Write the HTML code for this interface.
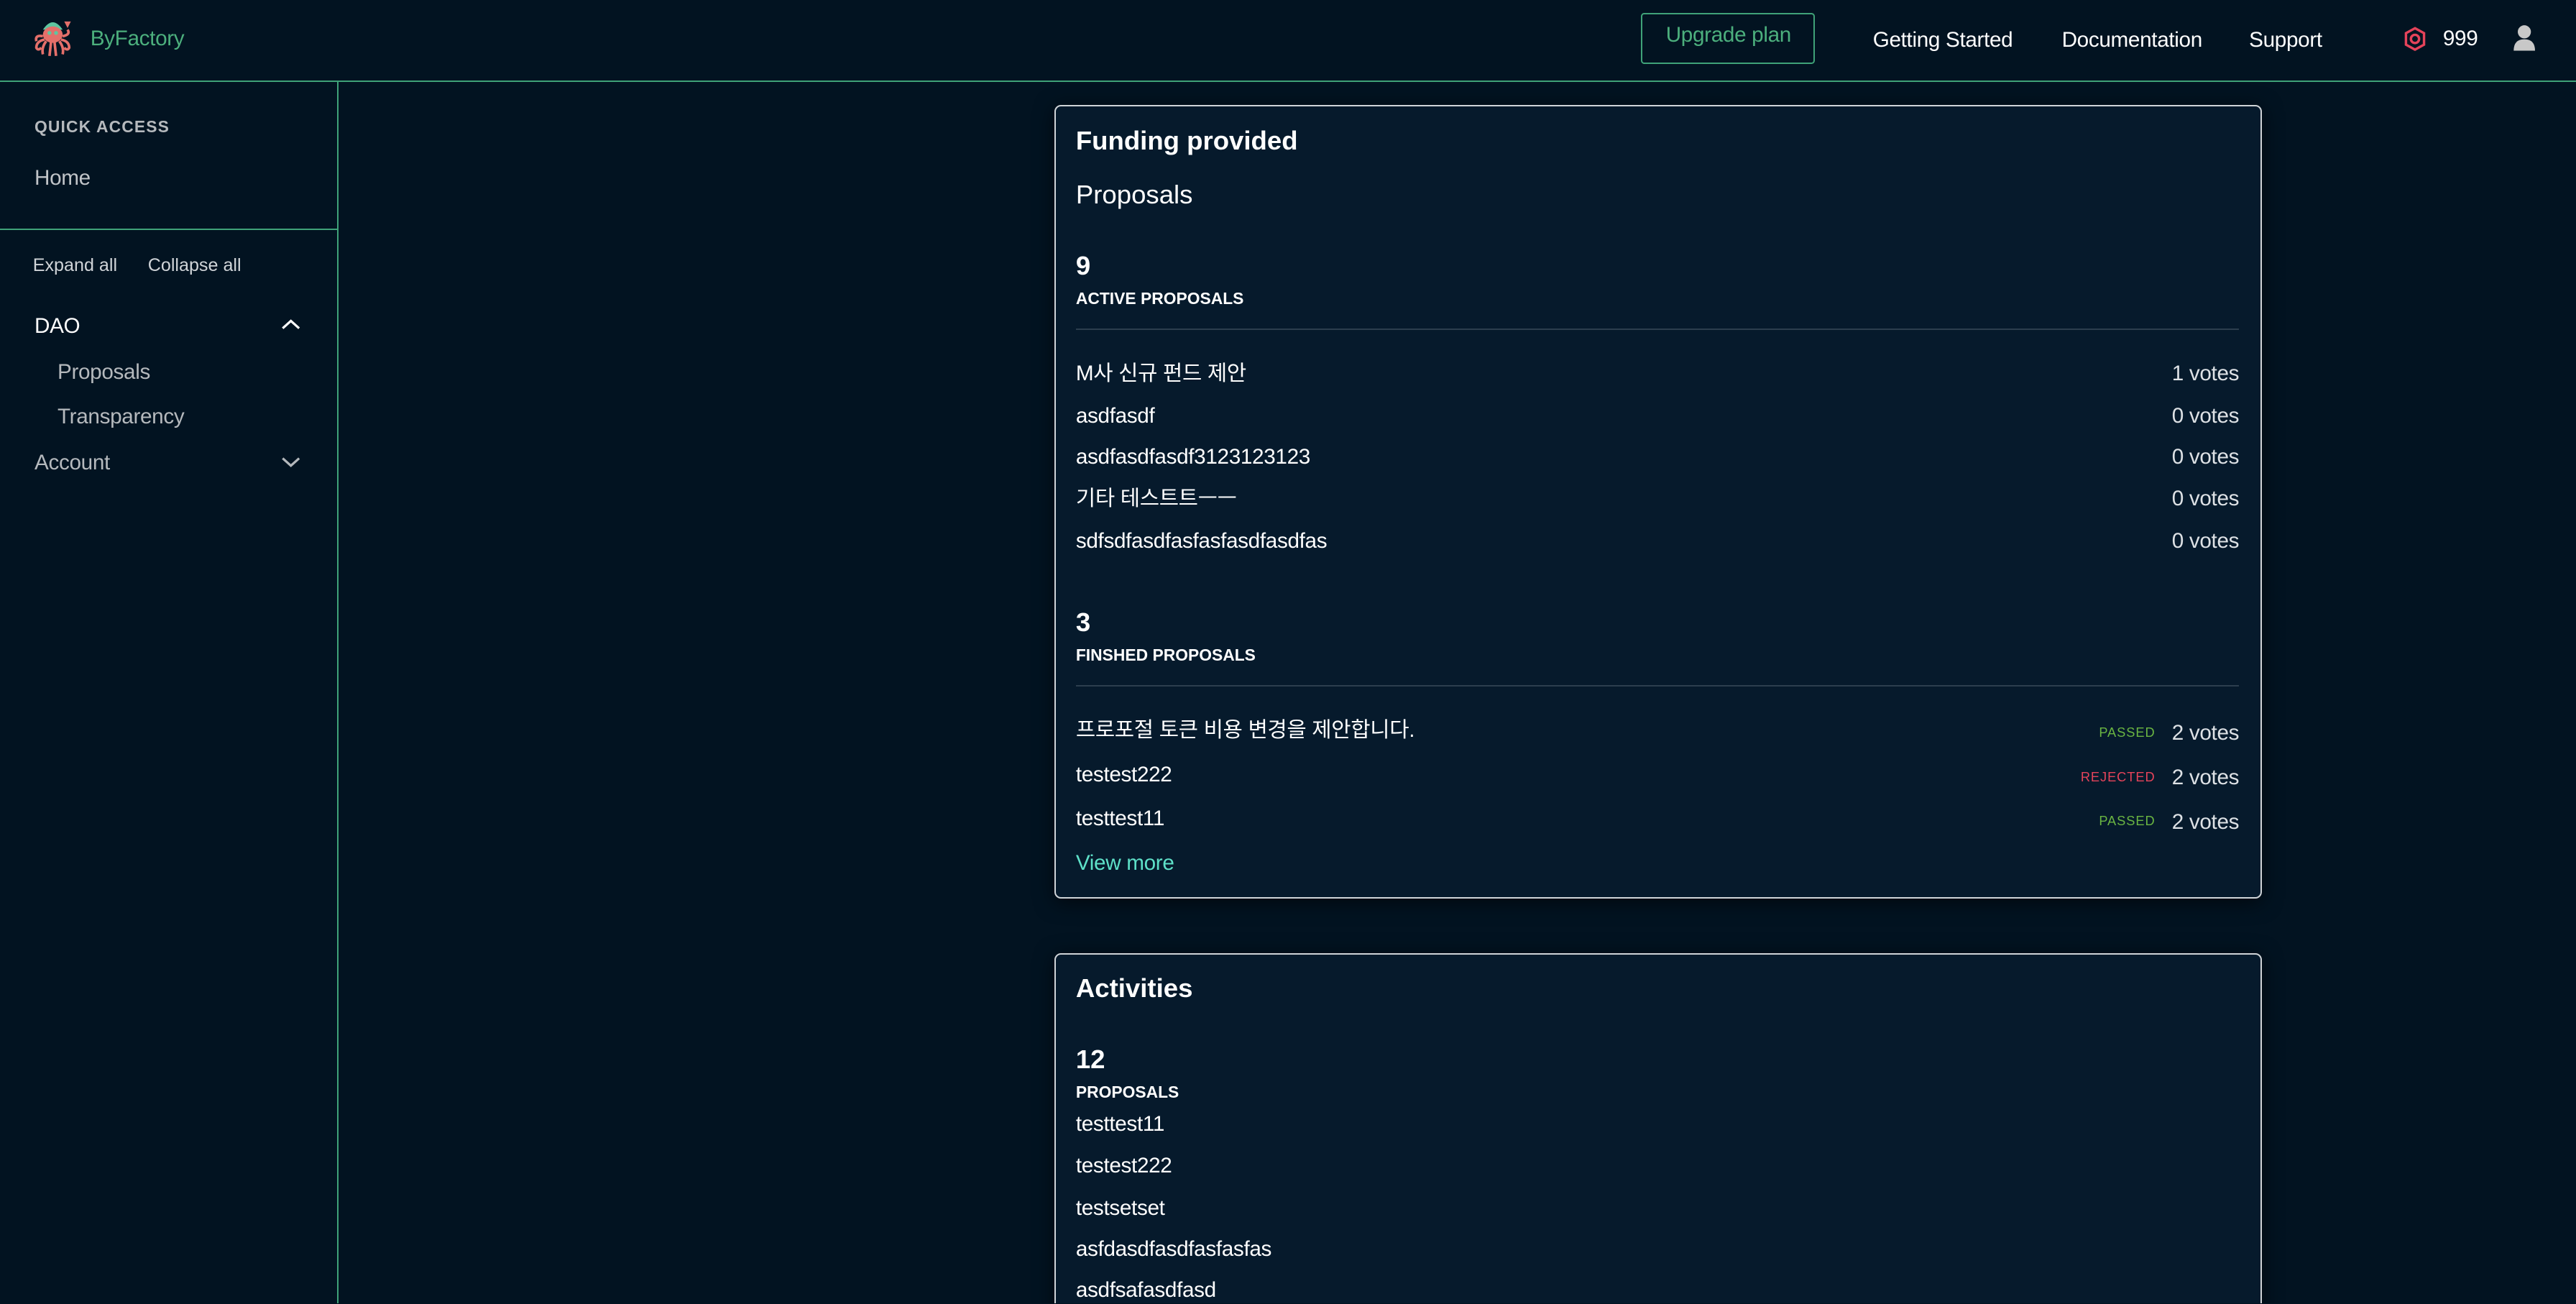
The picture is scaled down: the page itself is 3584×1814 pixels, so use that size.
<!DOCTYPE html>
<html><head><meta charset="utf-8"><style>
html,body{margin:0;padding:0;background:#021321;overflow:hidden;width:3584px;height:1814px}
#w{zoom:2.285714;position:relative;width:1568px;height:793px;overflow:hidden;font-family:"Liberation Sans","Noto Sans CJK KR",sans-serif;color:#fff}
.t{position:absolute;white-space:nowrap;line-height:1}
.f13{font-size:13px;letter-spacing:-.15px}
.card{position:absolute;left:642px;width:733px;background:#061a2c;border:1px solid #d0d4d8;border-radius:4px;box-shadow:0 2px 12px rgba(0,0,0,.6)}
.hr{position:absolute;left:12px;right:13px;height:1px;background:#2c3e4e}
.r{right:13px;text-align:right;color:#dde1e5}
.g{color:#6ab542;font-size:8px;letter-spacing:.4px}
.red{color:#e5435a;font-size:8px;letter-spacing:.4px}
</style></head><body><div id="w">
<div style="position:absolute;left:0;top:0;width:1568px;height:49px;border-bottom:1px solid #3fa278"></div>
<svg style="position:absolute;left:20px;top:10px" width="24" height="26" viewBox="0 0 24 26">
<path d="M6 8 Q12 -1 18 8 Z" fill="#5fc5a0"/>
<ellipse cx="12" cy="11" rx="6" ry="5" fill="#e46f6a"/>
<circle cx="10" cy="10" r="1.2" fill="#5fc5a0"/><circle cx="14" cy="10" r="1.2" fill="#5fc5a0"/>
<path d="M7 14 Q2 15 2 19 Q3 21 5 19 M8 15 Q5 19 6 23 M11 15 L10 24 M13 15 L14 24 M16 15 Q19 19 18 23 M17 14 Q22 15 22 19 Q21 21 19 19 M6 12 Q1 11 2 15 M18 12 Q23 11 21 8" stroke="#e46f6a" stroke-width="1.6" fill="none"/>
<path d="M19 3 L23 3 L21 7 Z" fill="#e46f6a"/>
</svg>
<div class="t f13" style="left:55px;top:17px;color:#4caf7d">ByFactory</div>
<div style="position:absolute;left:999px;top:8px;width:104px;height:29px;border:1px solid #3fa278;border-radius:2px"></div>
<div class="t f13" style="left:1014px;top:15px;color:#4caf7d">Upgrade plan</div>
<div class="t f13" style="left:1140px;top:18px">Getting Started</div>
<div class="t f13" style="left:1255px;top:18px">Documentation</div>
<div class="t f13" style="left:1369px;top:18px">Support</div>
<svg style="position:absolute;left:1463px;top:16px" width="14" height="15" viewBox="0 0 14 15"><path d="M7 1 L12.5 4 L12.5 11 L7 14 L1.5 11 L1.5 4 Z" stroke="#e5435a" stroke-width="1.5" fill="none"/><circle cx="7" cy="7.5" r="2.5" stroke="#e5435a" stroke-width="1.5" fill="none"/></svg>
<div class="t f13" style="left:1487px;top:17px">999</div>
<svg style="position:absolute;left:1529px;top:15px" width="15" height="17" viewBox="0 0 15 17"><circle cx="7.5" cy="4.5" r="4" fill="#c8c8c8"/><path d="M1 16 Q1 9 7.5 9 Q14 9 14 16 Z" fill="#c8c8c8"/></svg>
<div style="position:absolute;left:205px;top:50px;width:1px;height:744px;background:#3fa278"></div>
<div style="position:absolute;left:0;top:139px;width:205px;height:1px;background:#3fa278"></div>
<div class="t" style="left:21px;top:72px;font-size:10px;font-weight:bold;color:#b5b9bd;letter-spacing:.5px">QUICK ACCESS</div>
<div class="t f13" style="left:21px;top:102px;color:#c0c4c8">Home</div>
<div class="t" style="left:20px;top:156px;font-size:11px;color:#d0d4d8">Expand all</div>
<div class="t" style="left:90px;top:156px;font-size:11px;color:#d0d4d8">Collapse all</div>
<div class="t f13" style="left:21px;top:192px">DAO</div>
<svg style="position:absolute;left:171px;top:194px" width="12" height="8"><path d="M1 6 L6 1.5 L11 6" stroke="#fff" stroke-width="1.4" fill="none"/></svg>
<div class="t f13" style="left:35px;top:220px;color:#b5b9bd">Proposals</div>
<div class="t f13" style="left:35px;top:247px;color:#b5b9bd">Transparency</div>
<div class="t f13" style="left:21px;top:275px;color:#b5b9bd">Account</div>
<svg style="position:absolute;left:171px;top:277px" width="12" height="8"><path d="M1 2 L6 6.5 L11 2" stroke="#b5b9bd" stroke-width="1.4" fill="none"/></svg>
<div class="card" style="top:64px;height:481px">
<div class="t" style="left:12px;top:13px;font-size:16px;font-weight:bold">Funding provided</div>
<div class="t" style="left:12px;top:46px;font-size:16px">Proposals</div>
<div class="t" style="left:12px;top:89px;font-size:16px;font-weight:bold">9</div>
<div class="t" style="left:12px;top:112px;font-size:10px;font-weight:bold">ACTIVE PROPOSALS</div>
<div class="hr" style="top:135px"></div>
<div class="t f13" style="left:12px;top:156px">M사 신규 펀드 제안</div><div class="t f13 r" style="top:156px">1 votes</div>
<div class="t f13" style="left:12px;top:182px">asdfasdf</div><div class="t f13 r" style="top:182px">0 votes</div>
<div class="t f13" style="left:12px;top:207px">asdfasdfasdf3123123123</div><div class="t f13 r" style="top:207px">0 votes</div>
<div class="t f13" style="left:12px;top:232px">기타 테스트트ㅡㅡ</div><div class="t f13 r" style="top:232px">0 votes</div>
<div class="t f13" style="left:12px;top:258px">sdfsdfasdfasfasfasdfasdfas</div><div class="t f13 r" style="top:258px">0 votes</div>
<div class="t" style="left:12px;top:306px;font-size:16px;font-weight:bold">3</div>
<div class="t" style="left:12px;top:329px;font-size:10px;font-weight:bold">FINSHED PROPOSALS</div>
<div class="hr" style="top:352px"></div>
<div class="t f13" style="left:12px;top:373px">프로포절 토큰 비용 변경을 제안합니다.</div>
<div class="t g" style="right:64px;top:377px">PASSED</div><div class="t f13 r" style="top:375px">2 votes</div>
<div class="t f13" style="left:12px;top:400px">testest222</div>
<div class="t red" style="right:64px;top:404px">REJECTED</div><div class="t f13 r" style="top:402px">2 votes</div>
<div class="t f13" style="left:12px;top:427px">testtest11</div>
<div class="t g" style="right:64px;top:431px">PASSED</div><div class="t f13 r" style="top:429px">2 votes</div>
<div class="t f13" style="left:12px;top:454px;color:#5ee0c8">View more</div>
</div>
<div class="card" style="top:580px;height:260px">
<div class="t" style="left:12px;top:13px;font-size:16px;font-weight:bold">Activities</div>
<div class="t" style="left:12px;top:56px;font-size:16px;font-weight:bold">12</div>
<div class="t" style="left:12px;top:79px;font-size:10px;font-weight:bold">PROPOSALS</div>
<div class="t f13" style="left:12px;top:97px">testtest11</div>
<div class="t f13" style="left:12px;top:122px">testest222</div>
<div class="t f13" style="left:12px;top:148px">testsetset</div>
<div class="t f13" style="left:12px;top:173px">asfdasdfasdfasfasfas</div>
<div class="t f13" style="left:12px;top:198px">asdfsafasdfasd</div>
</div>
</div></body></html>
